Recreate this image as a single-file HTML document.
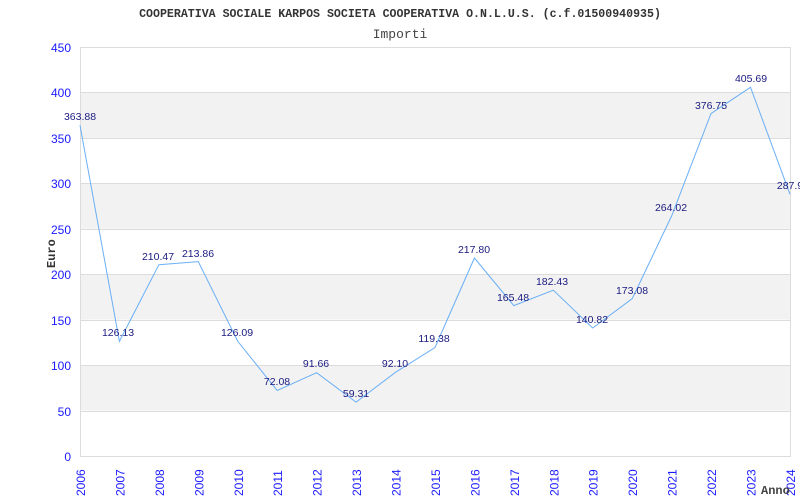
<!DOCTYPE html>
<html><head><meta charset="utf-8"><style>
html,body{margin:0;padding:0;background:#fff;width:800px;height:500px;overflow:hidden}
</style></head><body>
<svg width="800" height="500" xmlns="http://www.w3.org/2000/svg">
<rect x="0" y="0" width="800" height="500" fill="#fff"/>
<g fill="#f2f2f2">
<rect x="80" y="92.4" width="710" height="45.4"/>
<rect x="80" y="183.3" width="710" height="45.4"/>
<rect x="80" y="274.2" width="710" height="45.4"/>
<rect x="80" y="365.1" width="710" height="45.4"/>
</g>
<g stroke="#dcdcdc" stroke-width="1">
<line x1="80" y1="47.5" x2="790" y2="47.5"/>
<line x1="80" y1="92.5" x2="790" y2="92.5"/>
<line x1="80" y1="138.5" x2="790" y2="138.5"/>
<line x1="80" y1="183.5" x2="790" y2="183.5"/>
<line x1="80" y1="229.5" x2="790" y2="229.5"/>
<line x1="80" y1="274.5" x2="790" y2="274.5"/>
<line x1="80" y1="320.5" x2="790" y2="320.5"/>
<line x1="80" y1="365.5" x2="790" y2="365.5"/>
<line x1="80" y1="411.5" x2="790" y2="411.5"/>
<line x1="80" y1="456.5" x2="790" y2="456.5"/>
<line x1="80.5" y1="47" x2="80.5" y2="457"/>
<line x1="790.5" y1="47" x2="790.5" y2="457"/>
</g>
<polyline fill="none" stroke="#6aaff5" stroke-width="1" points="80,125.3 119.4,341.4 158.9,264.7 198.3,261.6 237.8,341.4 277.2,390.5 316.6,372.7 356.1,402.1 395.5,372.3 435,347.5 474.4,258 513.8,305.6 553.3,290.2 592.7,328 632.2,298.7 671.6,216 711,113.6 750.5,87.3 790,194.3"/>
<g font-family="Liberation Sans, sans-serif" font-size="10.5" fill="#1a1a80" text-anchor="middle">
<text x="80" y="120">363.88</text>
<text x="118" y="336">126.13</text>
<text x="158" y="260">210.47</text>
<text x="198" y="257">213.86</text>
<text x="237" y="336">126.09</text>
<text x="277" y="385">72.08</text>
<text x="316" y="367">91.66</text>
<text x="356" y="397">59.31</text>
<text x="395" y="367">92.10</text>
<text x="434" y="342">119.38</text>
<text x="474" y="253">217.80</text>
<text x="513" y="301">165.48</text>
<text x="552" y="285">182.43</text>
<text x="592" y="323">140.82</text>
<text x="632" y="294">173.08</text>
<text x="671" y="211">264.02</text>
<text x="711" y="109">376.75</text>
<text x="751" y="82">405.69</text>
<text x="790" y="189">287.9</text>
</g>
<g font-family="Liberation Sans, sans-serif" font-size="12" fill="#1a1aff" text-anchor="end">
<text x="71" y="52">450</text>
<text x="71" y="97">400</text>
<text x="71" y="143">350</text>
<text x="71" y="188">300</text>
<text x="71" y="234">250</text>
<text x="71" y="279">200</text>
<text x="71" y="325">150</text>
<text x="71" y="370">100</text>
<text x="71" y="416">50</text>
<text x="71" y="461">0</text>
</g>
<g font-family="Liberation Sans, sans-serif" font-size="12" fill="#1a1aff">
<text transform="translate(85,496) rotate(-90)">2006</text>
<text transform="translate(124.4,496) rotate(-90)">2007</text>
<text transform="translate(163.9,496) rotate(-90)">2008</text>
<text transform="translate(203.3,496) rotate(-90)">2009</text>
<text transform="translate(242.8,496) rotate(-90)">2010</text>
<text transform="translate(282.2,496) rotate(-90)">2011</text>
<text transform="translate(321.6,496) rotate(-90)">2012</text>
<text transform="translate(361.1,496) rotate(-90)">2013</text>
<text transform="translate(400.5,496) rotate(-90)">2014</text>
<text transform="translate(440,496) rotate(-90)">2015</text>
<text transform="translate(479.4,496) rotate(-90)">2016</text>
<text transform="translate(518.8,496) rotate(-90)">2017</text>
<text transform="translate(558.3,496) rotate(-90)">2018</text>
<text transform="translate(597.7,496) rotate(-90)">2019</text>
<text transform="translate(637.2,496) rotate(-90)">2020</text>
<text transform="translate(676.6,496) rotate(-90)">2021</text>
<text transform="translate(716,496) rotate(-90)">2022</text>
<text transform="translate(755.5,496) rotate(-90)">2023</text>
<text transform="translate(795,496) rotate(-90)">2024</text>
</g>
<text x="400" y="17" text-anchor="middle" font-family="Liberation Mono, monospace" font-weight="bold" font-size="11.6" fill="#333">COOPERATIVA SOCIALE KARPOS SOCIETA COOPERATIVA O.N.L.U.S. (c.f.01500940935)</text>
<text x="400" y="38" text-anchor="middle" font-family="Liberation Mono, monospace" font-size="13" fill="#444">Importi</text>
<text transform="translate(55,268) rotate(-90)" font-family="Liberation Mono, monospace" font-weight="bold" font-size="12" fill="#333">Euro</text>
<text x="761" y="494" font-family="Liberation Mono, monospace" font-weight="bold" font-size="12" fill="#444">Anno</text>
</svg>
</body></html>
